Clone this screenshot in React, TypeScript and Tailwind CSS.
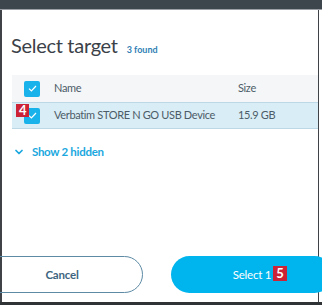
import { ChevronDown } from "lucide-react";

const Check = () => (
  <div className="w-4 h-4 rounded-[2px] bg-[#1ab2ea] flex items-center justify-center">
    <svg width="9" height="7" viewBox="0 0 9 7" fill="none">
      <path d="M1 3.6 L3.4 6 L8 1" stroke="white" strokeWidth="1.2" />
    </svg>
  </div>
);

const Badge = ({ n, className }: { n: string; className: string }) => (
  <div className={"bg-[#cc2436] text-white font-bold text-[13px] leading-none flex items-center justify-center " + className}>
    {n}
  </div>
);

export default function App() {
  return (
    <div className="w-[322px] h-[305px] overflow-hidden bg-white relative" style={{ fontFamily: "Lato, 'Open Sans', sans-serif" }}>
      <div className="h-[10px] bg-[#3d454d] border-b border-[#9aa0a6]" />
      <div className="h-[292px] w-[319px] border-l-2 border-r border-[#3f4347] flex flex-col">
        <div className="flex items-baseline gap-[9px] pl-[9px] pt-[23px]">
          <span className="text-[20px] leading-6 text-[#3b4148] tracking-[-0.3px]">Select target</span>
          <span className="text-[9px] font-bold text-[#2f7fb5]">3 found</span>
        </div>
        <div className="ml-[10px] mt-[18px] text-[11px] tracking-[-0.35px] whitespace-nowrap text-[#4c5c68]">
          <div className="h-[27px] bg-[#f4f6f7] flex items-center">
            <div className="w-[42px] pl-[12px]"><Check /></div>
            <span className="w-[184px]">Name</span>
            <span>Size</span>
          </div>
          <div className="h-[27px] bg-[#d9edf6] border-y border-[#bcd8e7] flex items-center relative">
            <div className="w-[42px] pl-[12px]"><Check /></div>
            <span className="w-[184px]">Verbatim STORE N GO USB Device</span>
            <span>15.9 GB</span>
            <Badge n="4" className="absolute left-[4px] top-[1px] w-[13px] h-[13px]" />
          </div>
        </div>
        <div className="flex items-center gap-[7px] pl-[11px] mt-[14px] text-[11.5px] tracking-[-0.3px] font-bold text-[#1aa8de]">
          <ChevronDown size={12} strokeWidth={3.5} />
          <span>Show 2 hidden</span>
        </div>
        <div className="flex-1" />
        <div className="flex gap-[28px] ml-[-21px] mb-[9px]">
          <div className="w-[162px] h-[37px] shrink-0 rounded-full border border-[#5d8aa5] flex items-center justify-center text-[11.5px] tracking-[-0.2px] font-bold text-[#3e6580]">
            Cancel
          </div>
          <div className="w-[162px] h-[37px] shrink-0 rounded-full bg-[#00b5ed] flex items-center justify-center text-[11.5px] tracking-[-0.2px] text-white relative">
            <span>Select 1</span>
            <Badge n="5" className="absolute left-[102px] top-[10px] w-[14px] h-[15px]" />
          </div>
        </div>
      </div>
      <div className="h-[3px] bg-[#2f3336]" />
    </div>
  );
}
